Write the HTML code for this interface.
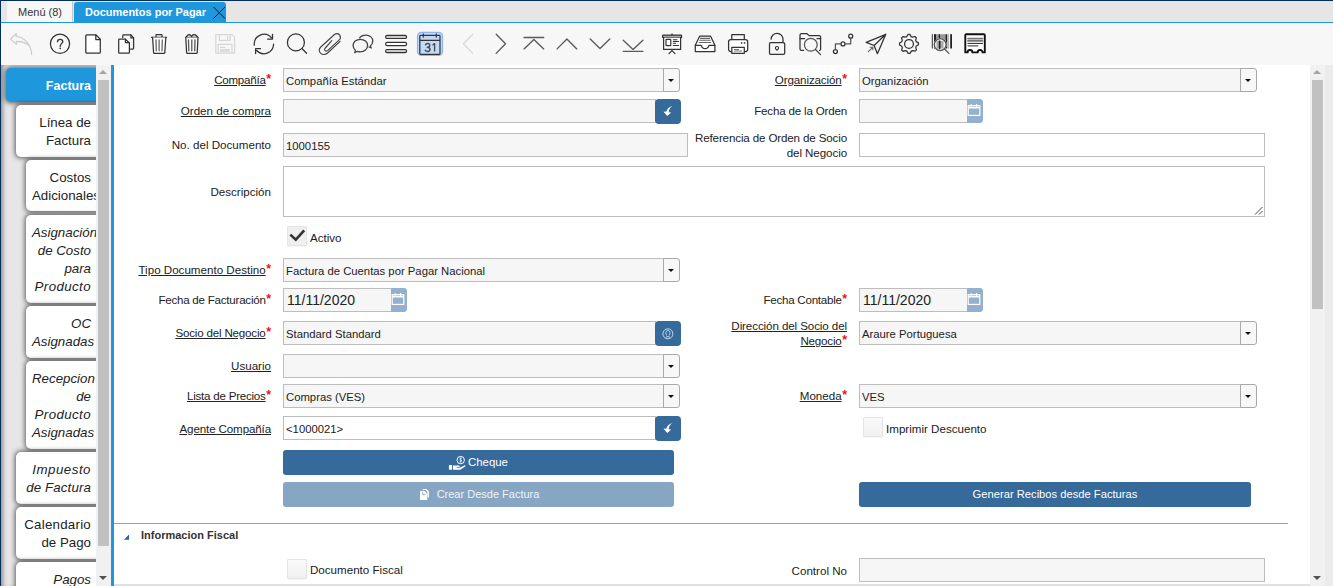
<!DOCTYPE html>
<html><head><meta charset="utf-8">
<style>
*{box-sizing:border-box}
html,body{margin:0;padding:0}
body{width:1333px;height:586px;overflow:hidden;position:relative;background:#f7f7f7;font-family:"Liberation Sans",sans-serif;color:#333}
.a{position:absolute}
.lbl{position:absolute;font-size:11.6px;color:#222;text-align:right;white-space:nowrap;line-height:15px}
.req{color:#f21111;font-size:12.5px;font-weight:bold;position:relative;top:-1px;margin-left:0.5px}
.fld{position:absolute;height:24px;border:1px solid #bdbdbd;background:#f6f6f6;font-size:11.3px;color:#222;line-height:22px;padding-top:1px;padding-left:2px;white-space:nowrap;overflow:hidden}
.w{background:#fff}
.ddb{position:absolute;height:24px;width:17px;border:1px solid #a9a9a9;border-radius:0 3px 3px 0;background:#f7f7f7}
.ddb:after{content:"";position:absolute;left:3.5px;top:10px;border-left:3.5px solid transparent;border-right:3.5px solid transparent;border-top:3.5px solid #111}
.bb{position:absolute;width:26px;height:25px;background:#356a9b;border-radius:4px}
.cal{position:absolute;width:16px;height:24px;background:#93b0cc;clip-path:polygon(0 0,14px 0,16px 2px,16px 22px,14px 24px,0 24px)}
.tab{position:absolute;background:#fff;border-radius:5px;box-shadow:0 0 5px 0.5px rgba(0,0,0,.6);font-size:13.3px;line-height:18px;color:#222;white-space:nowrap}
.btn{position:absolute;height:25px;border-radius:3px;color:#fff;font-size:12px;text-align:center;line-height:25px;white-space:nowrap}
.cb{position:absolute;width:20px;height:20px;background:linear-gradient(#fafafa,#f0f0f0);border:1px solid #e4e4e4;border-radius:1px;box-shadow:0 1px 1px rgba(0,0,0,.04)}
.ct{position:absolute;font-size:11.6px;color:#1a1a1a;line-height:15px;white-space:nowrap}
</style></head><body>
<div class="a" style="left:0;top:0;width:1333px;height:1px;background:#022f60"></div>
<div class="a" style="left:0;top:0;width:1px;height:586px;background:#022f60"></div>
<div class="a" style="left:1px;top:1px;width:1332px;height:21px;background:#e6e6e6"></div>
<div class="a" style="left:7px;top:1px;width:65px;height:21px;background:#f7f7f7"></div>
<div class="a" style="left:72px;top:2px;width:1px;height:20px;background:#c8c8c8"></div>
<div class="a" style="left:18px;top:5px;font-size:11px;line-height:14px;color:#333">Menú (8)</div>
<div class="a" style="left:74px;top:2px;width:152px;height:20px;background:#1f97dc;border-radius:3px 3px 0 0"></div>
<div class="a" style="left:85px;top:5px;font-size:11px;line-height:14px;font-weight:bold;color:#fff">Documentos por Pagar</div>
<svg class="a" style="left:0;top:0" width="240" height="22"><path d="M213.5 7 L225 18.5 M225 7 L213.5 18.5" stroke="#111" stroke-width="1"/></svg>
<div class="a" style="left:1px;top:22px;width:1332px;height:1px;background:#1f97dc"></div>
<svg class="a" style="left:0;top:0" width="1333" height="65" fill="none" stroke-linecap="round" stroke-linejoin="round">
<g stroke="#cfcfcf" stroke-width="1.3">
<path d="M31.6 54.6 C31.5 44 24 37.2 16.3 36.4 L16.3 33.6 L10.5 38.9 L16.3 44.4 L16.3 41.5 C23 41.5 27.5 43.3 30.2 46.5"/>
</g>
<g stroke="#333" stroke-width="1.25">
<circle cx="60" cy="43.8" r="9.6"/>
<path d="M57.5 41.8 C57.5 40 58.6 39.3 60.1 39.3 C61.8 39.3 62.8 40.3 62.8 41.7 C62.8 43.2 60.2 43.8 60.2 46.4" stroke-width="1.3"/>
<circle cx="60.2" cy="48.3" r="0.85" fill="#333" stroke="none"/>
<path d="M85.8 35.8 Q85.8 34.8 86.8 34.8 L95.8 34.8 L100.3 39.3 L100.3 52.3 Q100.3 53.2 99.3 53.2 L86.8 53.2 Q85.8 53.2 85.8 52.2 Z" fill="#fff"/>
<path d="M95.8 34.8 L95.8 39.5 L100.3 39.5"/>
<path d="M122.8 37.5 L122.8 35.6 Q122.8 34.8 123.6 34.8 L130.9 34.8 L133.6 37.8 L133.6 48.2 Q133.6 49 132.8 49 L130.5 49" fill="none"/>
<path d="M130.9 34.8 L130.9 37.9 L133.6 37.9" stroke-width="1.2"/>
<path d="M118.7 40 Q118.7 39.2 119.5 39.2 L125.4 39.2 L129.4 43 L129.4 52.4 Q129.4 53.2 128.6 53.2 L119.5 53.2 Q118.7 53.2 118.7 52.4 Z" fill="#fff"/>
<path d="M125.4 39.2 L125.4 42.6 L129.4 42.6" stroke-width="1.2"/>
<path d="M151.5 37.3 L166.5 37.3 M156 37 L156 35.2 Q156 34.6 156.6 34.6 L161.4 34.6 Q162 34.6 162 35.2 L162 37"/>
<path d="M152.6 37.5 L153.6 52.6 Q153.7 53.3 154.4 53.3 L164 53.3 Q164.7 53.3 164.8 52.6 L165.8 37.5" fill="#fff"/>
<path d="M156 40 L156.3 50.8 M159.1 40 L159.1 50.8 M162.3 40 L162 50.8" stroke="#666" stroke-width="1.3"/>
<path d="M185.6 37.3 L198 37.3 M185.8 37.3 L188 34.8 L190 34.6 L191.6 36.4 L193.2 34.6 L195.4 34.8 L197.8 37.3"/>
<path d="M185.8 37.5 L186.6 52.6 Q186.7 53.3 187.4 53.3 L196.4 53.3 Q197.1 53.3 197.2 52.6 L198 37.5" fill="#fff"/>
<path d="M188.5 40 L188.8 50.8 M191.8 40 L191.8 50.8 M195 40 L194.7 50.8" stroke="#555" stroke-width="1.3"/>
</g>
<g stroke="#d6d6d6" stroke-width="1.2">
<path d="M215.8 34.6 L232 34.6 L234.6 37.2 L234.6 53.2 L215.8 53.2 Z"/>
<path d="M219.5 34.8 L219.5 40.4 L230.2 40.4 L230.2 34.8 M227.6 36.5 L227.6 39"/>
<path d="M218.2 53 L218.2 44.4 L232 44.4 L232 53 M220.4 47.3 L225 47.3 M220.4 49.7 L229.5 49.7 M220.4 51.2 L229.5 51.2"/>
</g>
<g stroke="#333" stroke-width="1.25">
<path d="M254.3 45.2 A9.8 9.8 0 0 1 271.5 37.8"/>
<path d="M272.5 34.3 L272.5 39 L267.6 39" />
<path d="M273.6 44.2 A9.8 9.8 0 0 1 256.6 50.5"/>
<path d="M255.6 53.6 L255.6 48.7 L260.5 48.7"/>
<circle cx="295.9" cy="42.4" r="8.5"/>
<path d="M302.2 48.8 L306.6 53.3"/>
</g>
<g stroke="#444" stroke-width="1.15">
<path d="M340.1 41.3 L327.6 53 C325.2 55.2 321.6 55 320 52.5 C318.8 50.6 319.2 48.6 320.8 47 L334.2 34.8 C336.2 33 338.7 33.3 339.9 35.4 C340.9 37 340.5 38.8 339 40.2 L327.6 50.6 C326.6 51.4 325.4 51.2 324.8 50.3 C324.3 49.4 324.6 48.6 325.3 48 L331.8 40.6"/>
</g>
<g stroke="#444" stroke-width="1.3">
<path d="M359.6 37.9 C360.7 36.2 363 35.1 366.1 35.1 C370 35.1 372.8 37.8 372.8 41.1 C372.8 43.3 371.8 45 370.3 46 L371.3 48 L369 47"/>
<path d="M355.3 50.3 C353.9 49.2 353.1 47.5 353.1 45.6 C353.1 42 356.3 39.3 360.3 39.3 C364.4 39.3 367.6 42 367.6 45.6 C367.6 49.1 364.4 51.8 360.3 51.8 C359.2 51.8 358.2 51.6 357.3 51.3 L354.8 52.7 Z"/>
</g>
<g stroke="#333" stroke-width="1.2">
<rect x="385.6" y="35.3" width="21" height="3.2" rx="1.6" fill="#c9c9c9"/>
<rect x="385.6" y="42.4" width="21" height="3.2" rx="1.6" fill="#fff"/>
<rect x="385.6" y="49.5" width="21" height="3.2" rx="1.6" fill="#c9c9c9"/>
</g>
<rect x="417.5" y="32.3" width="25" height="23.2" rx="4" fill="#c2daf7" stroke="#8cb5f2" stroke-width="1.2"/>
<g stroke="#333" stroke-width="1.25">
<path d="M419.8 36.2 Q419.8 35.4 420.6 35.4 L439.2 35.4 Q440 35.4 440 36.2 L440 53.6 Q440 54.4 439.2 54.4 L420.6 54.4 Q419.8 54.4 419.8 53.6 Z M419.8 40.3 L440 40.3"/>
<path d="M423.3 33.8 L423.3 37.3 M436.3 33.8 L436.3 37.3" stroke-width="1.1"/>
</g>
<path d="M425.3 45.2 C425.8 43.9 426.7 43.5 427.6 43.5 C429 43.5 429.8 44.3 429.8 45.4 C429.8 46.5 428.8 47.2 427.3 47.2 C429 47.2 430 48 430 49.4 C430 50.8 428.9 51.5 427.5 51.5 C426.4 51.5 425.4 51 425 49.8 M432.5 45.3 L434.6 43.6 L434.6 51.6" stroke="#4a4a4a" stroke-width="1.35" fill="none" stroke-linecap="butt"/>
<g stroke="#d9d9d9" stroke-width="1.25"><path d="M472.8 34.3 L463.4 43.7 L472.8 53.4"/></g>
<g stroke="#5a5a5a" stroke-width="1.35">
<path d="M496.2 34.3 L505.5 43.7 L496.2 53.4"/>
<path d="M524 37.5 L543.7 37.5 M524 48.9 L533.9 39.4 L543.7 48.9"/>
<path d="M557.1 48.9 L566.9 39 L576.8 48.9"/>
<path d="M590.2 39 L600 48.6 L609.8 39"/>
<path d="M623.2 40.2 L633.1 49.4 L642.9 40.2 M623.2 51.4 L642.9 51.4"/>
</g>
<g stroke="#333" stroke-width="1.25">
<rect x="662.6" y="35.1" width="19" height="2.6" rx="0.6" fill="#aaa"/>
<path d="M672 35 L672 33.9"/>
<path d="M663.6 37.7 L663.6 49.4 L680.6 49.4 L680.6 37.7" fill="#fff"/>
<rect x="666" y="39.4" width="4.8" height="6.3" rx="0.7" stroke-width="1.2"/>
<path d="M673.3 39.7 L677 39.7 M673.3 41.5 L678.6 41.5 M673.3 43.3 L675.5 43.3 M673.3 45.5 L678.6 45.5" stroke-width="1.1"/>
<path d="M672 49.6 L672 50.6 L669 53.6 M672 50.6 L675 53.6" stroke-width="1.2"/>
<path d="M699.6 36.2 L710.6 36.2 L714.9 45.3 L714.9 51.6 L695.3 51.6 L695.3 45.3 Z" fill="#fff"/>
<path d="M695.3 45.3 L701.3 45.3 C701.8 47.5 703 48.6 705.1 48.6 C707.2 48.6 708.4 47.5 708.9 45.3 L714.9 45.3"/>
<path d="M700.4 38.4 L709.6 38.4 M699.8 40.3 L710.2 40.3 M699.3 42.5 L710.7 42.5" stroke="#666" stroke-width="1.1"/>
<path d="M731.8 39.5 L731.8 34.6 L744.3 34.6 L744.3 39.5"/>
<path d="M731.6 51.5 L730.8 51.5 Q728.6 51.5 728.6 49.3 L728.6 41.7 Q728.6 39.5 730.8 39.5 L745.5 39.5 Q747.7 39.5 747.7 41.7 L747.7 49.3 Q747.7 51.5 745.5 51.5 L744.5 51.5" fill="#fff"/>
<rect x="731.8" y="47.3" width="12.5" height="6" fill="#fff"/>
<path d="M734.4 49.5 L738.5 49.5 M734.4 51 L741.5 51" stroke="#777" stroke-width="1.2"/>
<path d="M741.3 43 L741.9 43 M744.3 43 L744.9 43" stroke-width="1.35"/>
<path d="M771.1 39.2 A5.9 5.9 0 0 1 783 39.4 L783 42.6"/>
<rect x="769.5" y="42.7" width="15.2" height="11.6" rx="1.3"/>
<path d="M777 50.3 C776 49.4 775.4 48.9 775.4 48.1 C775.4 47.2 776.1 46.5 777 46.5 C777.9 46.5 778.6 47.2 778.6 48.1 C778.6 48.9 778 49.4 777 50.3 Z" stroke-width="1.1"/>
<path d="M803.6 50.4 L801.4 50.4 Q800 50.4 800 49 L800 35 Q800 33.7 801.4 33.7 L807 33.7 L809.1 35.6 L819.2 35.6 Q820.6 35.6 820.6 37 L820.6 49 Q820.6 50.4 819.6 50.4"/>
<path d="M800 38.6 L804.6 38.6 M817 38.6 L820.6 38.6"/>
<circle cx="810.8" cy="44.8" r="6.4" stroke="#555"/>
<path d="M815.5 49.5 L820.6 54.6" stroke="#444"/>
<circle cx="835.4" cy="51.6" r="2"/>
<circle cx="843" cy="43.9" r="2"/>
<circle cx="850.7" cy="36.2" r="2"/>
<path d="M835.4 49.6 L835.4 43.9 L841 43.9 M845 43.9 L850.7 43.9 L850.7 38.2" stroke="#555"/>
<path d="M885.8 34.3 L866.2 42.4 L874.1 45.5 L877.4 53.7 Z M874.1 45.5 L885.8 34.3" stroke-width="1.3"/>
<path d="M868.3 51.7 L872.8 47.3 M870.2 47.3 L872.8 47.3 L872.8 49.8" stroke="#666" stroke-width="1.1"/>
</g>
<path d="M907.98 34.46 L909.84 34.44 L911.13 36.61 L912.52 37.16 L914.95 36.50 L916.28 37.80 L915.67 40.25 L916.25 41.62 L918.44 42.88 L918.46 44.74 L916.29 46.03 L915.74 47.42 L916.40 49.85 L915.10 51.18 L912.65 50.57 L911.28 51.15 L910.02 53.34 L908.16 53.36 L906.87 51.19 L905.48 50.64 L903.05 51.30 L901.72 50.00 L902.33 47.55 L901.75 46.18 L899.56 44.92 L899.54 43.06 L901.71 41.77 L902.26 40.38 L901.60 37.95 L902.90 36.62 L905.35 37.23 L906.72 36.65 Z" stroke="#333" stroke-width="1.25"/><circle cx="909" cy="43.9" r="4.4" stroke="#333" stroke-width="1.25"/><g>
<rect x="931.8" y="34.2" width="1" height="14.3" fill="#333"/>
<rect x="934" y="34.2" width="2" height="14.3" fill="#222"/>
<rect x="936" y="34.2" width="2.6" height="14.3" fill="#999"/>
<rect x="938.6" y="34.2" width="1.4" height="4" fill="#222"/>
<rect x="940" y="34.2" width="5.5" height="14.3" fill="#999"/>
<rect x="945.5" y="34.2" width="1.5" height="14.3" fill="#222"/>
<rect x="947.2" y="34.2" width="1.6" height="14.3" fill="#aaa"/>
<rect x="950.2" y="34.2" width="1.8" height="14.3" fill="#222"/>
<circle cx="940.2" cy="44.6" r="6.6" fill="#f7f7f7"/>
<rect x="936.5" y="41" width="7" height="7.5" fill="#aaa"/>
<rect x="938.8" y="40.5" width="1.6" height="8.4" fill="#222"/>
<circle cx="940.2" cy="44.6" r="5.9" stroke="#555" stroke-width="1.3" fill="none"/>
<path d="M944.6 49 L948.9 53.4" stroke="#555" stroke-width="1.25"/>
</g>
<g stroke="#111" stroke-width="1.9">
<path d="M965.3 52.4 L965.3 35.3 Q965.3 34.3 966.3 34.3 L983.8 34.3 Q984.8 34.3 984.8 35.3 L984.8 52.4 L982.5 52.4 A2.4 2.4 0 0 0 977.7 52.4 L972.4 52.4 A2.4 2.4 0 0 0 967.6 52.4 Z" fill="#fff"/>
</g>
<path d="M968 38.6 L982.5 38.6 M968 40.9 L982.5 40.9" stroke="#777" stroke-width="1.8"/>
<path d="M968 43.4 L982.5 43.4" stroke="#222" stroke-width="1"/>
<path d="M968 45.8 L977.8 45.8" stroke="#555" stroke-width="1.2"/>
</svg>
<div class="a" style="left:1px;top:65px;width:95px;height:521px;background:#e6e6e6;overflow:hidden;box-shadow:inset 4px 0 4px -2px rgba(0,0,0,.38)">
<div class="tab" style="left:5px;top:3px;width:120px;height:34px;background:#1f97dc;color:#fff;font-weight:bold;font-size:12.5px"><div style="position:absolute;left:6px;top:9px;width:79px;text-align:right">Factura</div></div>
<div class="tab" style="left:15px;top:40px;width:120px;height:52px;"><div style="position:absolute;left:6px;top:9px;width:69px;text-align:right">Línea de<br>Factura</div></div>
<div class="tab" style="left:25px;top:95px;width:120px;height:51px;"><div style="position:absolute;left:6px;top:9px;width:59px;text-align:right">Costos<br>Adicionales</div></div>
<div class="tab" style="left:25px;top:150px;width:120px;height:88px;"><div style="position:absolute;left:6px;top:9px;width:59px;text-align:right"><i>Asignación<br>de Costo<br>para<br><span style="letter-spacing:.4px">Producto</span></i></div></div>
<div class="tab" style="left:25px;top:241px;width:120px;height:52px;"><div style="position:absolute;left:6px;top:9px;width:59px;text-align:right"><i>OC<br>Asignadas</i></div></div>
<div class="tab" style="left:25px;top:296px;width:120px;height:88px;"><div style="position:absolute;left:6px;top:9px;width:59px;text-align:right"><i>Recepcion<br>de<br><span style="letter-spacing:.4px">Producto</span><br>Asignadas</i></div></div>
<div class="tab" style="left:15px;top:387px;width:120px;height:52px;"><div style="position:absolute;left:6px;top:9px;width:69px;text-align:right"><i><span style="letter-spacing:.5px">Impuesto</span><br><span style="letter-spacing:.12px">de Factura</span></i></div></div>
<div class="tab" style="left:15px;top:442px;width:120px;height:52px;"><div style="position:absolute;left:6px;top:9px;width:69px;text-align:right"><span style="letter-spacing:.25px">Calendario</span><br>de Pago</div></div>
<div class="tab" style="left:15px;top:497px;width:120px;height:52px;"><div style="position:absolute;left:6px;top:9px;width:69px;text-align:right"><i>Pagos</i></div></div>
</div>
<div class="a" style="left:96px;top:65px;width:15px;height:521px;background:#f1f1f1"></div>
<div class="a" style="left:98px;top:80px;width:11px;height:466px;background:#c1c1c1"></div>
<div class="a" style="left:99px;top:70px;border-left:4.5px solid transparent;border-right:4.5px solid transparent;border-bottom:4.5px solid #a3a3a3"></div>
<div class="a" style="left:99px;top:576px;border-left:4.5px solid transparent;border-right:4.5px solid transparent;border-top:4.5px solid #505050"></div>
<div class="a" style="left:111px;top:65px;width:3px;height:521px;background:#1f97dc"></div>
<div class="a" style="left:114px;top:65px;width:1196px;height:521px;background:#fff"></div>
<div class="lbl" style="right:1062px;top:71.5px"><u style="letter-spacing:-0.25px">Compañía</u><span class="req">*</span></div>
<div class="fld" style="left:283px;top:68px;width:381px;height:24px;">Compañía Estándar</div>
<div class="ddb" style="left:663px;top:68px"></div>
<div class="lbl" style="right:486px;top:71.5px"><u style="letter-spacing:-0.13px">Organización</u><span class="req">*</span></div>
<div class="fld" style="left:859px;top:68px;width:382px;height:24px;">Organización</div>
<div class="ddb" style="left:1240px;top:68px"></div>
<div class="lbl" style="right:1062px;top:102.5px"><u style="letter-spacing:0px">Orden de compra</u></div>
<div class="fld" style="left:283px;top:99px;width:373px;height:24px;"></div>
<div class="bb" style="left:655px;top:99px"><svg class="a" style="left:0;top:0" width="26" height="25"><path d="M17.4 7.2 C14.5 7.5 12 9.5 11.5 12.5 L8.5 12.8 L12.3 17 L16.2 13.4 L13.8 13.3 C13.8 10.5 15 8.5 17.4 7.2 Z" fill="#fff"/></svg></div>
<div class="lbl" style="right:486px;top:102.5px"><span style="letter-spacing:-0.19px">Fecha de la Orden</span></div>
<div class="fld" style="left:859px;top:99px;width:109px;height:24px;font-size:14px;padding-left:3px;padding-top:0"></div>
<div class="cal" style="left:967px;top:99px"><svg class="a" style="left:0;top:0" width="16" height="24" fill="none" stroke="#fff"><rect x="1.2" y="6.6" width="11.6" height="9.8" stroke-width="1.2"/><path d="M1.2 8.6 L12.8 8.6" stroke-width="1.6"/><path d="M4.2 5 L4.2 8 M9.6 5 L9.6 8" stroke-width="1.1"/></svg></div>
<div class="lbl" style="right:1062px;top:136.5px"><span style="letter-spacing:0px">No. del Documento</span></div>
<div class="fld" style="left:283px;top:133px;width:405px;height:24px;">1000155</div>
<div class="lbl" style="right:486px;top:130px"><span style="letter-spacing:-0.14px">Referencia de Orden de Socio</span><br><span style="letter-spacing:-0.09px">del Negocio</span></div>
<div class="fld w" style="left:859px;top:133px;width:406px;height:24px;"></div>
<div class="lbl" style="right:1062px;top:183.5px"><span style="letter-spacing:0px">Descripción</span></div>
<div class="fld w" style="left:283px;top:166px;width:982px;height:51px;"></div>
<div class="cb" style="left:287px;top:226px;background:#efefef"><svg class="a" style="left:-1px;top:-1px" width="20" height="20"><path d="M3.3 8.6 L8.8 13.6 L17.2 4.3" stroke="#333" stroke-width="2.6" fill="none"/></svg></div>
<div class="ct" style="left:310px;top:230px">Activo</div>
<div class="lbl" style="right:1062px;top:261.5px"><u style="letter-spacing:0px">Tipo Documento Destino</u><span class="req">*</span></div>
<div class="fld" style="left:283px;top:258px;width:381px;height:24px;">Factura de Cuentas por Pagar Nacional</div>
<div class="ddb" style="left:663px;top:258px"></div>
<div class="lbl" style="right:1062px;top:291.5px"><span style="letter-spacing:-0.245px">Fecha de Facturación</span><span class="req">*</span></div>
<div class="fld" style="left:283px;top:288px;width:109px;height:24px;font-size:14px;padding-left:3px;padding-top:0">11/11/2020</div>
<div class="cal" style="left:391px;top:288px"><svg class="a" style="left:0;top:0" width="16" height="24" fill="none" stroke="#fff"><rect x="1.2" y="6.6" width="11.6" height="9.8" stroke-width="1.2"/><path d="M1.2 8.6 L12.8 8.6" stroke-width="1.6"/><path d="M4.2 5 L4.2 8 M9.6 5 L9.6 8" stroke-width="1.1"/></svg></div>
<div class="lbl" style="right:486px;top:291.5px"><span style="letter-spacing:-0.27px">Fecha Contable</span><span class="req">*</span></div>
<div class="fld" style="left:859px;top:288px;width:109px;height:24px;font-size:14px;padding-left:3px;padding-top:0">11/11/2020</div>
<div class="cal" style="left:967px;top:288px"><svg class="a" style="left:0;top:0" width="16" height="24" fill="none" stroke="#fff"><rect x="1.2" y="6.6" width="11.6" height="9.8" stroke-width="1.2"/><path d="M1.2 8.6 L12.8 8.6" stroke-width="1.6"/><path d="M4.2 5 L4.2 8 M9.6 5 L9.6 8" stroke-width="1.1"/></svg></div>
<div class="lbl" style="right:1062px;top:324.5px"><u style="letter-spacing:-0.19px">Socio del Negocio</u><span class="req">*</span></div>
<div class="fld" style="left:283px;top:321px;width:373px;height:24px;">Standard Standard</div>
<div class="bb" style="left:655px;top:321px"><svg class="a" style="left:0;top:0" width="26" height="25" fill="none" stroke="#c9d8e6" stroke-width="1"><circle cx="12.9" cy="12.8" r="5"/><path d="M11.3 10.3 C10.5 11.5 11 13.5 11.6 14.5 M14.5 10.3 C15.3 11.5 14.8 13.5 14.2 14.5 M11.3 10.3 C12 9.2 13.8 9.2 14.5 10.3 M10.6 16.6 C11.5 15.3 14.3 15.3 15.2 16.6"/></svg></div>
<div class="lbl" style="right:486px;top:318px"><u style="letter-spacing:-0.1px">Dirección del Socio del</u><br><u style="letter-spacing:-0.19px">Negocio</u><span class="req">*</span></div>
<div class="fld" style="left:859px;top:321px;width:382px;height:24px;">Araure Portuguesa</div>
<div class="ddb" style="left:1240px;top:321px"></div>
<div class="lbl" style="right:1062px;top:357.5px"><u style="letter-spacing:0px">Usuario</u></div>
<div class="fld" style="left:283px;top:354px;width:381px;height:24px;"></div>
<div class="ddb" style="left:663px;top:354px"></div>
<div class="lbl" style="right:1062px;top:387.5px"><u style="letter-spacing:-0.24px">Lista de Precios</u><span class="req">*</span></div>
<div class="fld" style="left:283px;top:384px;width:381px;height:24px;">Compras (VES)</div>
<div class="ddb" style="left:663px;top:384px"></div>
<div class="lbl" style="right:486px;top:387.5px"><u style="letter-spacing:0px">Moneda</u><span class="req">*</span></div>
<div class="fld" style="left:859px;top:384px;width:382px;height:24px;">VES</div>
<div class="ddb" style="left:1240px;top:384px"></div>
<div class="lbl" style="right:1062px;top:420.5px"><u style="letter-spacing:-0.13px">Agente Compañía</u></div>
<div class="fld w" style="left:283px;top:416px;width:373px;height:24px;">&lt;1000021&gt;</div>
<div class="bb" style="left:655px;top:416px"><svg class="a" style="left:0;top:0" width="26" height="25"><path d="M17.4 7.2 C14.5 7.5 12 9.5 11.5 12.5 L8.5 12.8 L12.3 17 L16.2 13.4 L13.8 13.3 C13.8 10.5 15 8.5 17.4 7.2 Z" fill="#fff"/></svg></div>
<div class="cb" style="left:863px;top:417px"></div>
<div class="ct" style="left:886px;top:421px">Imprimir Descuento</div>
<div class="btn" style="left:283px;top:450px;width:391px;background:#356a9b;font-size:11.4px;padding-left:19px">Cheque</div>
<div class="btn" style="left:283px;top:482px;width:391px;background:#87a6c4;font-size:11px;color:#eef3f7;padding-left:19px">Crear Desde Factura</div>
<div class="btn" style="left:859px;top:482px;width:392px;background:#356a9b;font-size:11.2px">Generar Recibos desde Facturas</div>
<div class="a" style="left:114px;top:523px;width:1174px;height:1px;background:#a0a0a0"></div>
<div class="a" style="left:141px;top:528px;font-size:11px;font-weight:bold;line-height:14px;color:#333">Informacion Fiscal</div>
<div class="cb" style="left:287px;top:559px"></div>
<div class="ct" style="left:310px;top:562px">Documento Fiscal</div>
<div class="lbl" style="right:486px;top:562.5px"><span style="letter-spacing:0px">Control No</span></div>
<div class="fld" style="left:859px;top:558px;width:406px;height:24px;"></div>
<div class="a" style="left:114px;top:584px;width:1196px;height:2px;background:#e0e0e0"></div>
<svg class="a" style="left:1249px;top:201px" width="15" height="15"><path d="M13.5 6 L6 13.5 M13.5 10 L10 13.5" stroke="#444" stroke-width="1"/></svg>
<svg class="a" style="left:440px;top:450px" width="30" height="25" fill="none"><circle cx="20.7" cy="10.1" r="3.7" stroke="#fff" stroke-width="1"/><path d="M21.6 8.4 C21 7.9 19.8 8.1 19.9 9.1 C20 10 21.6 9.8 21.5 11 C21.4 11.8 20.2 11.9 19.6 11.4 M20.7 7.5 L20.7 12.7" stroke="#fff" stroke-width="0.75"/><path d="M8.9 15 L12.1 15 L12.1 19.7 L8.9 19.7 Z" fill="#fff"/><path d="M13 15.6 L18.3 15.4 C19.6 15.4 20.2 16.4 19.4 16.9 L16.6 17.3 L16.8 17.9 L20.3 17.5 L24.4 15.4 C25.3 15 25.8 15.9 25.1 16.5 L20.3 19.8 L13 19.8 Z" fill="#fff"/></svg>
<svg class="a" style="left:410px;top:480px" width="30" height="25"><path d="M12.6 9 L16.5 9 L19 11.5 L19 17.5 L17.5 17.5 L17.5 12 L15.5 10 L12.6 10 Z" fill="#fff"/><path d="M10 11 L14.5 11 L17.2 13.7 L17.2 20 L10 20 Z" fill="#fff"/><path d="M12.8 12 L12.8 14.6 L15.4 14.6" stroke="#87a6c4" stroke-width="0.9" fill="none"/></svg>
<svg class="a" style="left:120px;top:530px" width="12" height="12"><path d="M4 9.8 L9 9.8 L9 4.6 Z" fill="#1565c0"/></svg>
<div class="a" style="left:1310px;top:65px;width:15px;height:521px;background:#f1f1f1"></div>
<div class="a" style="left:1325px;top:65px;width:8px;height:521px;background:#ebebeb"></div>
<div class="a" style="left:1312px;top:80px;width:11px;height:229px;background:#c1c1c1"></div>
<div class="a" style="left:1313px;top:70px;border-left:4.5px solid transparent;border-right:4.5px solid transparent;border-bottom:4.5px solid #a3a3a3"></div>
<div class="a" style="left:1313px;top:576px;border-left:4.5px solid transparent;border-right:4.5px solid transparent;border-top:4.5px solid #505050"></div>
</body></html>
